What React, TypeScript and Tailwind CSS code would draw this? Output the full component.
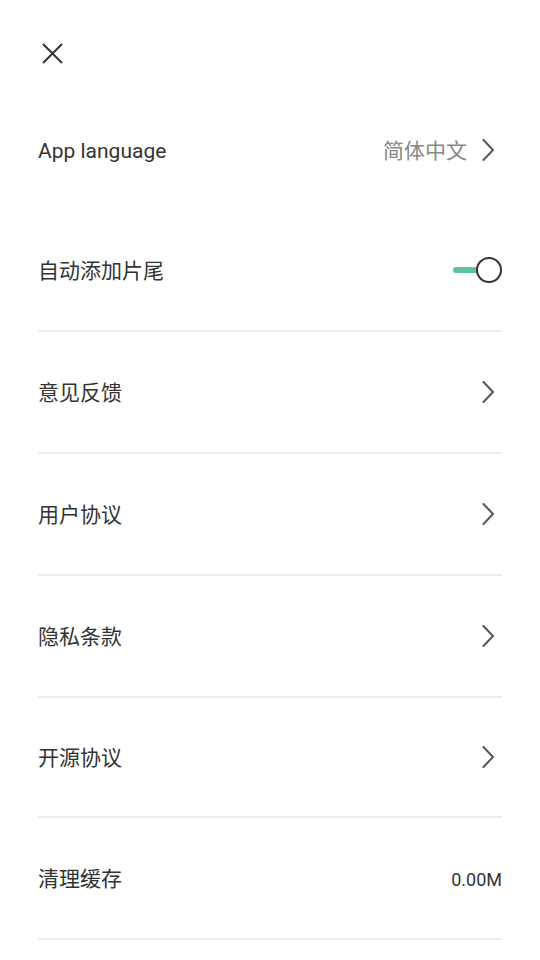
import React from "react";

const font = { fontFamily: 'Roboto, "Noto Sans CJK SC", sans-serif' };

function Chevron() {
  return (
    <svg width="13" height="22" viewBox="0 0 13 22" fill="none" className="mr-[7px] shrink-0">
      <path d="M1.5 1 L11 11 L1.5 21" stroke="#555555" strokeWidth="2" strokeLinecap="square" />
    </svg>
  );
}

function Row({
  label,
  right,
  divider = true,
  short = false,
}: {
  label: string;
  right?: React.ReactNode;
  divider?: boolean;
  short?: boolean;
}) {
  return (
    <div>
      <div className={short ? "flex h-[118px] items-center justify-between" : "flex h-[120px] items-center justify-between"}>
        <span className="pt-[3px] text-[21px] text-[#333333]">{label}</span>
        {right}
      </div>
      {divider && <div className="h-[2px] bg-[#ececec]" />}
    </div>
  );
}

export default function App() {
  return (
    <div className="min-h-[960px] bg-white px-[38px]" style={font}>
      <div className="h-[90px] pt-[43px] pl-[4px]">
        <svg width="21" height="21" viewBox="0 0 21 21" fill="none">
          <path d="M1 1 L20 20 M20 1 L1 20" stroke="#333333" strokeWidth="2" />
        </svg>
      </div>
      <Row
        label="App language"
        divider={false}
        right={
          <div className="flex items-center gap-[15px]">
            <span className="pt-[3px] text-[21px] text-[#888888]">简体中文</span>
            <Chevron />
          </div>
        }
      />
      <Row
        label="自动添加片尾"
        right={
          <div className="relative flex h-[26px] w-[50px] items-center">
            <div className="ml-[1px] h-[6px] w-[28px] rounded-full bg-[#5cc2a8]" />
            <div className="absolute right-0 top-0 h-[26px] w-[26px] rounded-full border-2 border-[#333333] bg-white" />
          </div>
        }
      />
      <Row label="意见反馈" right={<Chevron />} />
      <Row label="用户协议" right={<Chevron />} />
      <Row label="隐私条款" right={<Chevron />} />
      <Row label="开源协议" short right={<Chevron />} />
      <Row label="清理缓存" right={<span className="pt-[2px] text-[18px] text-[#333333]">0.00M</span>} />
    </div>
  );
}
